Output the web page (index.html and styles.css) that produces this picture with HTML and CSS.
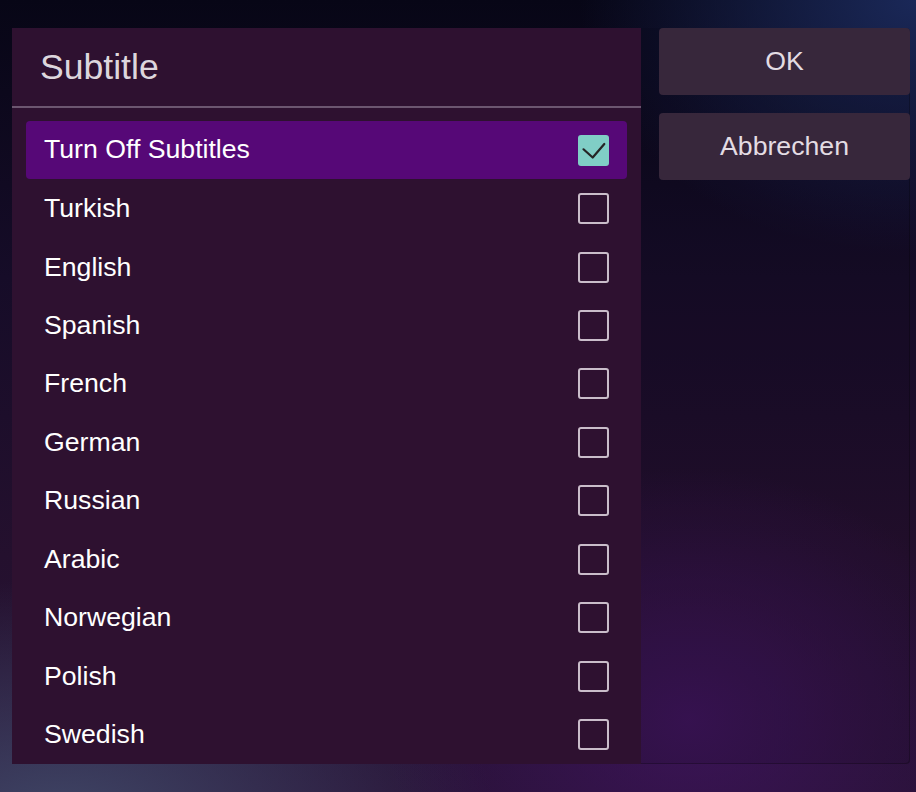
FILE: index.html
```html
<!DOCTYPE html>
<html lang="en">
<head>
<meta charset="utf-8">
<title>Subtitle</title>
<link rel="stylesheet" href="styles.css">
</head>
<body>
<div class="dialog">
  <section class="panel">
    <header class="panel-head">Subtitle</header>
    <ul class="list">
      <li class="row selected"><span>Turn Off Subtitles</span><span class="box checked"><svg viewBox="0 0 31 31" width="31" height="31"><path d="M5.5 14.3 L14.7 22.5 L26.3 9" fill="none" stroke="#252525" stroke-width="2.2" stroke-linecap="round" stroke-linejoin="round"/></svg></span></li>
      <li class="row"><span>Turkish</span><span class="box"></span></li>
      <li class="row"><span>English</span><span class="box"></span></li>
      <li class="row"><span>Spanish</span><span class="box"></span></li>
      <li class="row"><span>French</span><span class="box"></span></li>
      <li class="row"><span>German</span><span class="box"></span></li>
      <li class="row"><span>Russian</span><span class="box"></span></li>
      <li class="row"><span>Arabic</span><span class="box"></span></li>
      <li class="row"><span>Norwegian</span><span class="box"></span></li>
      <li class="row"><span>Polish</span><span class="box"></span></li>
      <li class="row"><span>Swedish</span><span class="box"></span></li>
    </ul>
  </section>
  <div class="actions">
    <button class="btn">OK</button>
    <button class="btn">Abbrechen</button>
  </div>
</div>
</body>
</html>
```

FILE: styles.css
```css
html, body {
  margin: 0;
  padding: 0;
}
body {
  width: 916px;
  height: 792px;
  overflow: hidden;
  font-family: "Liberation Sans", Arial, sans-serif;
  background:
    radial-gradient(ellipse 440px 360px at 690px 720px, rgba(62, 20, 92, 0.85), rgba(62, 20, 92, 0) 70%),
    radial-gradient(ellipse 580px 320px at 60px 820px, rgba(64, 72, 104, 0.95), rgba(64, 72, 104, 0) 75%),
    radial-gradient(ellipse 420px 320px at 916px 0px, rgba(26, 40, 88, 1), rgba(26, 40, 88, 0) 80%),
    linear-gradient(180deg, #070616 0%, #160c28 35%, #24102e 70%, #281236 100%);
  padding-top: 28px;
  padding-left: 12px;
  box-sizing: border-box;
}
.dialog {
  width: 898px;
  height: 736px;
  display: flex;
  gap: 18px;
  background: rgba(0, 0, 0, 0.08);
  border-radius: 4px;
  box-shadow: inset -1px -1px 0 rgba(0, 0, 0, 0.25);
}
.panel {
  width: 629px;
  height: 736px;
  background: #2e1130;
  display: flex;
  flex-direction: column;
  overflow: hidden;
}
.panel-head {
  height: 80px;
  flex: none;
  box-sizing: border-box;
  padding-left: 28px;
  padding-top: 1px;
  display: flex;
  align-items: center;
  font-size: 35.6px;
  color: #ddd6dd;
  border-bottom: 2px solid #6c5670;
}
.list {
  list-style: none;
  margin: 0;
  padding: 13px 14px 0;
}
.row {
  height: 58.45px;
  box-sizing: border-box;
  padding: 0 18px;
  display: flex;
  align-items: center;
  justify-content: space-between;
  font-size: 26.67px;
  color: #ffffff;
  border-radius: 4px;
}
.row.selected {
  background: #560877;
  padding-bottom: 2px;
}
.row.selected .box {
  margin-top: 2px;
}
.box {
  width: 31px;
  height: 31px;
  box-sizing: border-box;
  border: 2px solid #cabdca;
  border-radius: 3px;
  flex: none;
}
.box.checked {
  border: none;
  background: #80cec6;
}
.box svg {
  display: block;
}
.actions {
  width: 251px;
  display: flex;
  flex-direction: column;
  gap: 18px;
}
.btn {
  height: 67px;
  border: none;
  border-radius: 4px;
  background: #37273b;
  color: #e3dce3;
  font-family: "Liberation Sans", Arial, sans-serif;
  font-size: 26.67px;
  padding: 0;
  padding-bottom: 1px;
}
```
